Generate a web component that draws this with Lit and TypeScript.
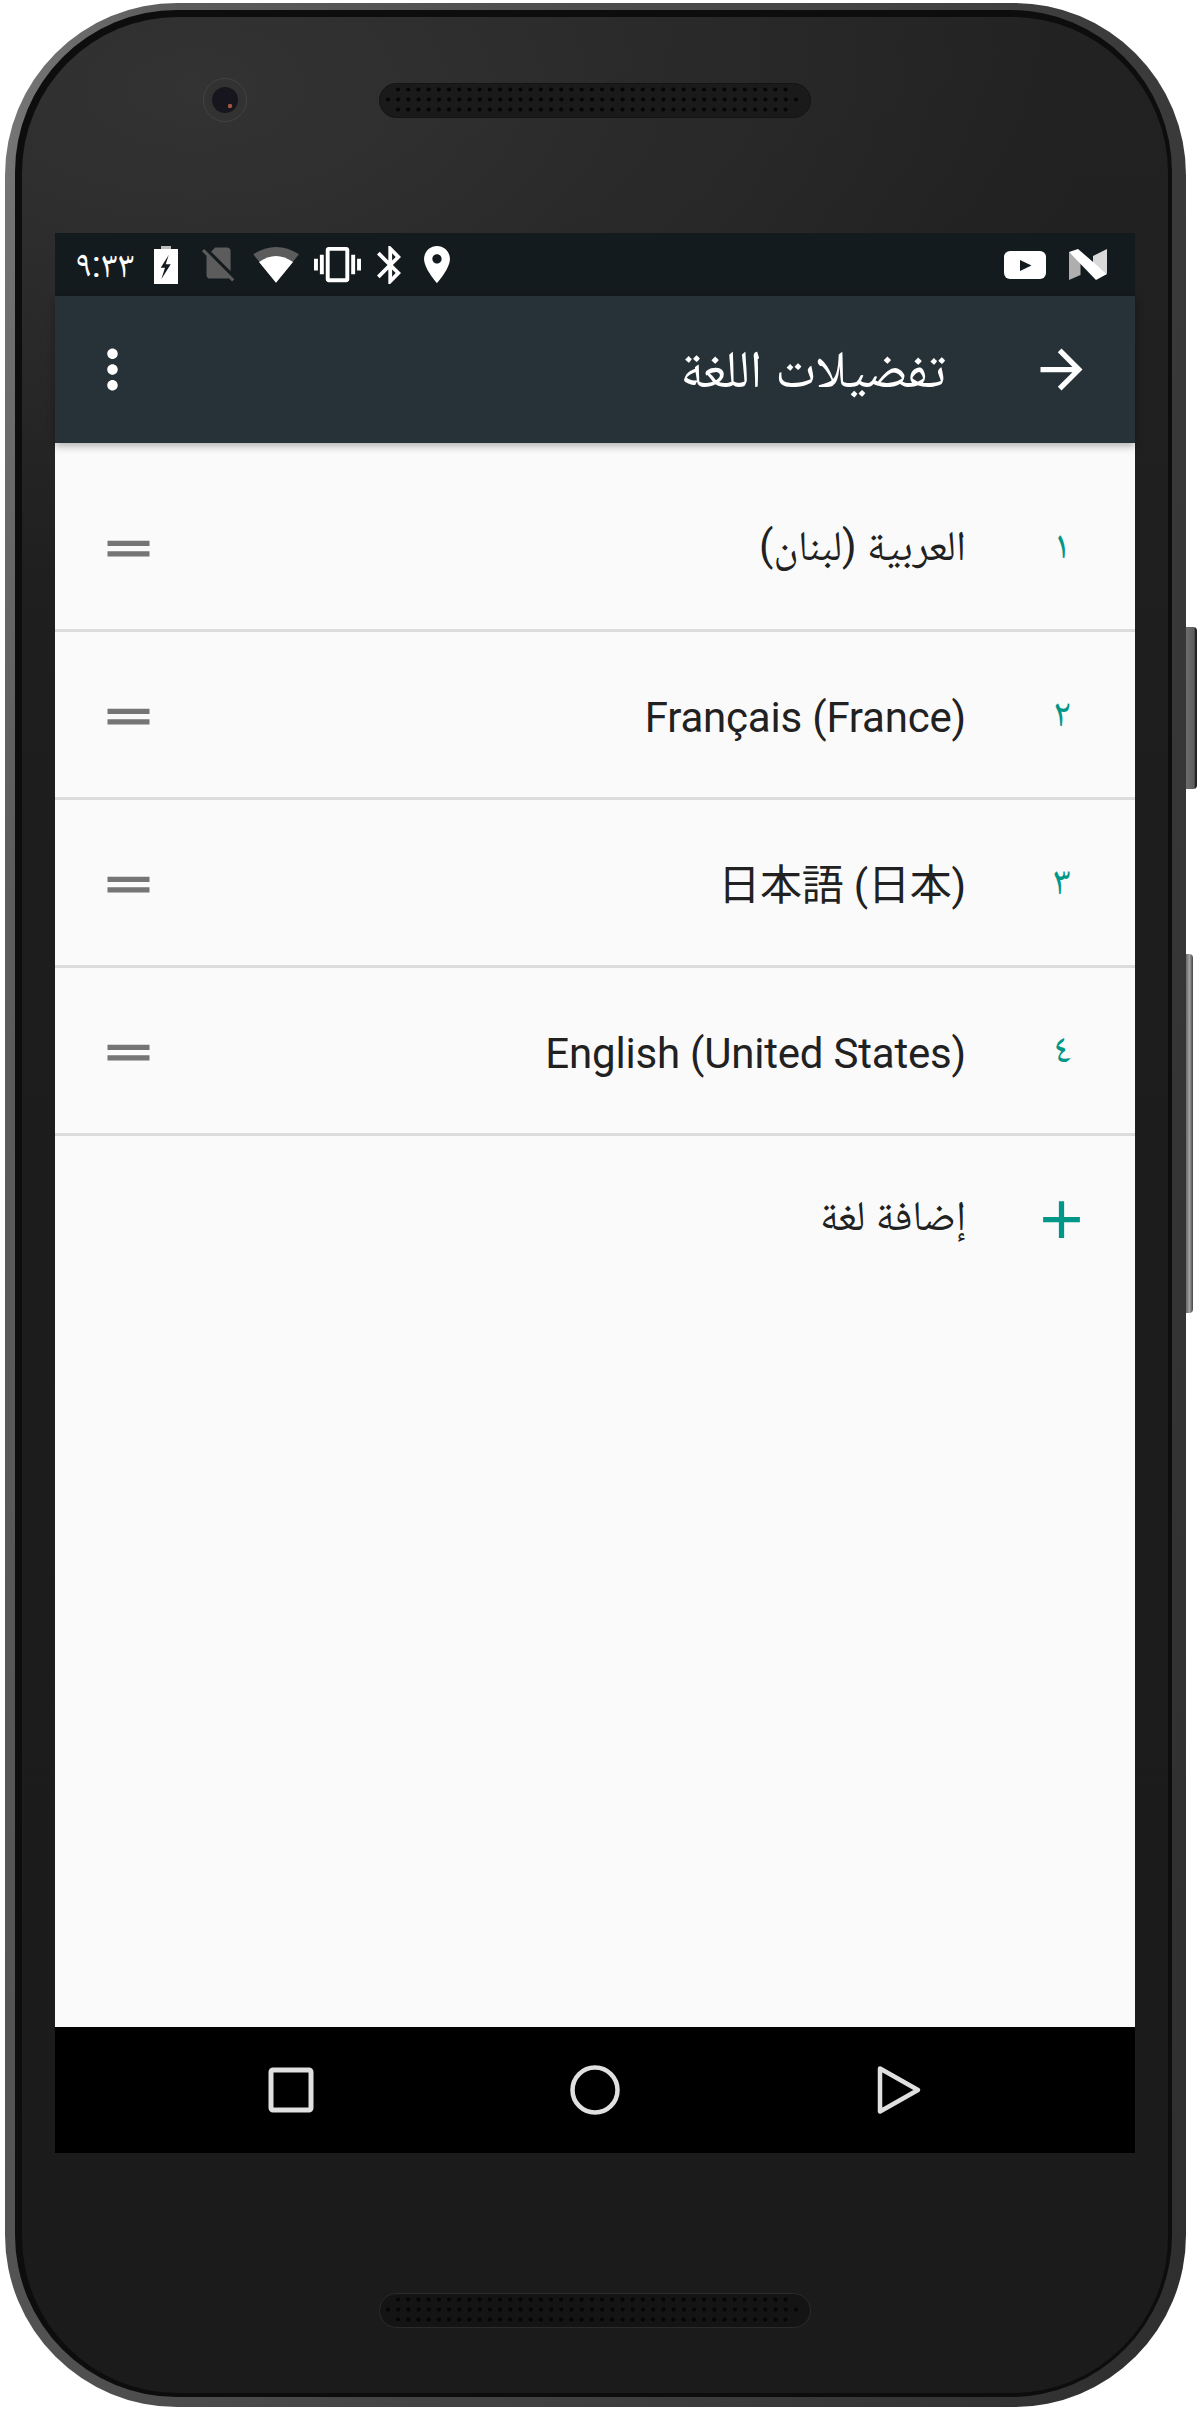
import { LitElement, html, css, svg } from "lit";
import { customElement } from "lit/decorators.js";

const speakerDots = () => {
  const dots = [];
  for (let r = 0; r < 3; r++) {
    const start = r === 1 ? 9 : 19;
    const n = r === 1 ? 41 : 39;
    for (let k = 0; k < n; k++) {
      dots.push(svg`<circle cx=${start + k * 10.2} cy=${6.5 + r * 10} r="2"></circle>`);
    }
  }
  return dots;
};

const speaker = (cls: string) => html`<svg class="speaker ${cls}" width="432" height="35" viewBox="0 0 432 35">
  <rect class="slot" x="0.5" y="0.5" width="431" height="34" rx="17"></rect>
  <g class="holes">${speakerDots()}</g>
</svg>`;

const rows = [
  { n: "١", t: "العربية (لبنان)", dir: "rtl" },
  { n: "٢", t: "Français (France)", dir: "ltr" },
  { n: "٣", t: "日本語 (日本)", dir: "ltr" },
  { n: "٤", t: "English (United States)", dir: "ltr" },
];

@customElement("app-root")
export class AppRoot extends LitElement {
  static styles = css`
    :host { display: block; width: 1198px; height: 2409px; background: #fff; overflow: hidden;
      font-family: Roboto, "Noto Naskh Arabic", "DejaVu Sans", "Noto Sans CJK JP", sans-serif; }
    svg { display: block; flex: none; }
    .device { position: relative; box-sizing: border-box; width: 1181px; height: 2404px; margin: 3px 0 0 5px;
      border-radius: 172px; padding: 7px 14px 10px 10px;
      background: linear-gradient(100deg, #7a7a7a 0%, #5c5c5c 10%, #454545 50%, #2e2e2e 100%); }
    .btn { position: absolute; left: 1181px; background: linear-gradient(90deg, #6d6d6d, #5c5c5c 75%, #222 85%); border-radius: 0 4px 4px 0; }
    .btn1 { top: 624px; width: 11px; height: 162px; }
    .btn2 { top: 951px; width: 7px; height: 359px; background: linear-gradient(90deg, #6a6a6a, #a0a0a0 50%, #444); }
    .bezel { box-sizing: border-box; height: 100%; border-radius: 162px; padding: 7px 4px 4px 7px; background: #0d0d0d; }
    .face { box-sizing: border-box; height: 100%; width: 1146px; border-radius: 156px; display: flex; flex-direction: column; overflow: hidden;
      background: radial-gradient(900px 500px at 15% 3%, #333 0%, rgba(40,40,40,0) 100%), linear-gradient(180deg, #222 0%, #1d1d1d 35%, #1b1b1b 100%); }
    .top { position: relative; height: 216px; flex: none; display: flex; justify-content: center; padding-top: 66px; box-sizing: border-box; }
    .bottom { flex: 1; display: flex; justify-content: center; padding-top: 140px; box-sizing: border-box; }
    .camera { position: absolute; left: 181px; top: 61px; }
    .slot { fill: #1a1a1a; stroke: #141414; }
    .speaker.lower .slot { fill: #141414; stroke: #2b2b2b; }
    .holes { fill: #060606; }
    .screen { flex: none; box-sizing: border-box; width: 1080px; height: 1920px; margin-left: 33px; background: #fafafa; display: flex; flex-direction: column; }
    .status { flex: none; height: 63px; background: #141b1f; display: flex; align-items: center; color: #fff; }
    .time { width: 60px; margin-left: 20px; font-size: 37.5px; line-height: 1; white-space: nowrap; }
    .ic-batt { margin-left: 19px; }
    .ic-sim { margin-left: 24px; }
    .ic-wifi { margin-left: 17px; }
    .ic-vib { margin-left: 15px; }
    .ic-bt { margin-left: 16px; }
    .ic-pin { margin-left: 23px; }
    .spacer { flex: 1; }
    .ic-yt { margin-right: 23.5px; }
    .ic-n { margin-right: 28px; }
    .appbar { position: relative; z-index: 1; flex: none; height: 147px; background: #263238; color: #fff; display: flex; align-items: center; box-sizing: border-box;
      box-shadow: 0 3px 8px rgba(0,0,0,.3); direction: rtl; padding: 0 42px 0 26px; }
    .title { flex: 1; margin-right: 84px; font-size: 52.5px; line-height: 1; }
    .list { flex: 1; padding-top: 21px; direction: rtl; }
    .row { box-sizing: border-box; height: 168px; padding-top: 3px; display: flex; align-items: center; border-bottom: 3px solid #dcdcdc; }
    .num { flex: none; width: 146px; margin-left: 23px; padding-bottom: 7px; text-align: center; color: #009688; font-size: 40px; line-height: 1; }
    .label { flex: 1; font-size: 42px; line-height: 1.2; color: #212121; white-space: nowrap; text-align: right; }
    .label.rtl { padding-bottom: 3px; }
    .label.ltr { padding-top: 5px; letter-spacing: -0.2px; }
    .handle { margin-left: 42px; }
    .add { height: 166px; display: flex; align-items: center; }
    .add .label { padding-bottom: 5px; }
    .plus { margin-right: 42px; margin-left: 64px; }
    .nav { flex: none; height: 126px; background: #000; display: grid; grid-template-columns: repeat(3, 304px); justify-content: center; justify-items: center; align-items: center; }
  `;

  render() {
    return html`
      <div class="device">
        <div class="btn btn1"></div>
        <div class="btn btn2"></div>
        <div class="bezel">
          <div class="face">
            <div class="top">
              <svg class="camera" width="44" height="44" viewBox="0 0 44 44">
                <circle cx="22" cy="22" r="21.5" fill="#323232" stroke="#444" stroke-width="1"></circle>
                <circle cx="22" cy="22" r="13" fill="#17151d"></circle>
                <circle cx="27" cy="28" r="2.2" fill="#a3553f"></circle>
              </svg>
              ${speaker("upper")}
            </div>
            <div class="screen">
              <div class="status">
                <span class="time">٩:٣٣</span>
                <svg class="ic-batt" width="24" height="38" viewBox="0 0 24 38">
                  <path fill="#bdbdbd" d="M7 0h10v3H7z"></path>
                  <path fill="#fff" fill-rule="evenodd" d="M0 3h24v35H0zM14.7 9L6.7 21.7H11L7.3 33.3 16.7 18.3H11.7z"></path>
                </svg>
                <svg class="ic-sim" width="34" height="35" viewBox="2.38 3 19.74 19.62">
                  <path fill="#5c5c5c" d="M18.99 5c0-1.1-.89-2-1.99-2h-7L7.66 5.34 19 16.68 18.99 5zM3.65 3.88L2.38 5.15 5 7.77V19c0 1.1.9 2 2 2h10.01c.35 0 .67-.1.96-.26l1.88 1.88 1.27-1.27L3.65 3.88z"></path>
                </svg>
                <svg class="ic-wifi" width="46" height="36" viewBox="253 246 46 36">
                  <path fill="#5c5c5c" d="M253.3 253.3Q276 238.7 299 253.3L276 281.7Z"></path>
                  <path fill="#fff" d="M259 261Q276 249 293 261L276 281.7Z"></path>
                </svg>
                <svg class="ic-vib" width="47" height="47" viewBox="0 0 24 24">
                  <path fill="#fff" d="M0 15h2V9H0v6zm3 2h2V7H3v10zm19-8v6h2V9h-2zm-3 8h2V7h-2v10zM16.5 3h-9C6.67 3 6 3.67 6 4.5v15c0 .83.67 1.5 1.5 1.5h9c.83 0 1.5-.67 1.5-1.5v-15c0-.83-.67-1.5-1.5-1.5zM16 19H8V5h8v14z"></path>
                </svg>
                <svg class="ic-bt" width="24" height="38" viewBox="5 2 12.71 20">
                  <path fill="#fff" d="M17.71 7.71L12 2h-1v7.59L6.41 5 5 6.41 10.59 12 5 17.59 6.41 19 11 14.41V22h1l5.71-5.71-4.3-4.29 4.3-4.29zM13 5.83l1.88 1.88L13 9.59V5.83zm1.88 10.46L13 18.17v-3.76l1.88 1.88z"></path>
                </svg>
                <svg class="ic-pin" width="26" height="37" viewBox="5 2 14 20">
                  <path fill="#fff" d="M12 2C8.13 2 5 5.13 5 9c0 5.25 7 13 7 13s7-7.75 7-13c0-3.87-3.13-7-7-7zm0 9.5c-1.38 0-2.5-1.12-2.5-2.5s1.12-2.5 2.5-2.5 2.5 1.12 2.5 2.5-1.12 2.5-2.5 2.5z"></path>
                </svg>
                <div class="spacer"></div>
                <svg class="ic-yt" width="42" height="28" viewBox="0 0 42 28">
                  <rect width="42" height="28" rx="6" fill="#fff"></rect>
                  <path d="M16 9l11.5 5.5L16 20z" fill="#141b1f"></path>
                </svg>
                <svg class="ic-n" width="38" height="31" viewBox="0 0 38 31">
                  <path fill="#aeaeae" d="M0 3L11.5 12V26L0 31z"></path>
                  <path fill="#d9d9d9" d="M24 7L38 0V25L24 14z"></path>
                  <path fill="#fff" d="M0 3L9 0 38 25 27 31z"></path>
                </svg>
              </div>
              <div class="appbar">
                <svg width="63" height="63" viewBox="0 0 24 24"><path fill="#fff" transform="matrix(-1 0 0 1 24 0)" d="M20 11H7.83l5.59-5.59L12 4l-8 8 8 8 1.41-1.41L7.83 13H20v-2z"></path></svg>
                <div class="title">تفضيلات اللغة</div>
                <svg width="63" height="63" viewBox="0 0 24 24"><path fill="#fff" d="M12 8c1.1 0 2-.9 2-2s-.9-2-2-2-2 .9-2 2 .9 2 2 2zm0 2c-1.1 0-2 .9-2 2s.9 2 2 2 2-.9 2-2-.9-2-2-2zm0 6c-1.1 0-2 .9-2 2s.9 2 2 2 2-.9 2-2-.9-2-2-2z"></path></svg>
              </div>
              <div class="list">
                ${rows.map((r) => html`
                  <div class="row">
                    <div class="num">${r.n}</div>
                    <div class="label ${r.dir}"><span dir=${r.dir}>${r.t}</span></div>
                    <svg class="handle" width="63" height="63" viewBox="0 0 24 24"><path fill="#757575" d="M20 9H4v2h16V9zm0 4H4v2h16v-2z"></path></svg>
                  </div>`)}
                <div class="add">
                  <svg class="plus" width="63" height="63" viewBox="0 0 24 24"><path fill="#009688" d="M19 13h-6v6h-2v-6H5v-2h6V5h2v6h6v2z"></path></svg>
                  <div class="label">إضافة لغة</div>
                </div>
              </div>
              <div class="nav">
                <svg width="46" height="46" viewBox="0 0 46 46"><rect x="3" y="3" width="40" height="40" rx="2" fill="none" stroke="#e0e0e0" stroke-width="5"></rect></svg>
                <svg width="50" height="50" viewBox="0 0 50 50"><circle cx="25" cy="25" r="22.5" fill="none" stroke="#e0e0e0" stroke-width="4.5"></circle></svg>
                <svg width="46" height="50" viewBox="0 0 46 50"><path d="M4 3.5L42 25 4 46.5z" fill="none" stroke="#e0e0e0" stroke-width="4.5" stroke-linejoin="round"></path></svg>
              </div>
            </div>
            <div class="bottom">${speaker("lower")}</div>
          </div>
        </div>
      </div>`;
  }
}
